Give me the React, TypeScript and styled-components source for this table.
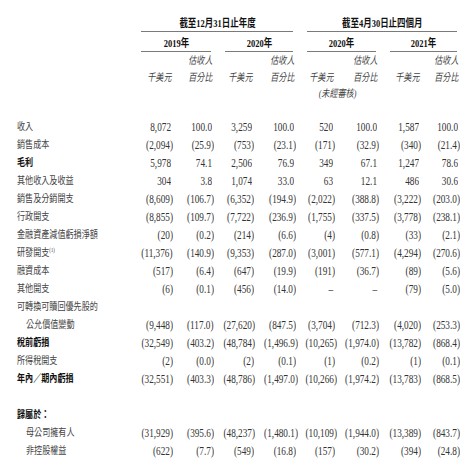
import React from "react";
import styled, { createGlobalStyle } from "styled-components";

const COLS = "130px 43px 41px 40px 42px 39px 44px 42px 39px";

const GlobalStyle = createGlobalStyle`
  html, body {
    margin: 0;
    padding: 0;
    background: #fff;
  }
  body {
    font-family: "Liberation Serif", "Noto Sans CJK TC", serif;
    color: #3a3a3a;
  }
`;

const Page = styled.div`
  width: 472px;
  height: 462px;
  overflow: hidden;
  padding-top: 16px;
  box-sizing: border-box;
`;

const Row = styled.div<{ $h: number }>`
  display: grid;
  grid-template-columns: ${COLS};
  height: ${(p) => p.$h}px;
  line-height: ${(p) => p.$h}px;
`;

const Spacer = styled.div<{ $h: number }>`
  height: ${(p) => p.$h}px;
`;

// scaled text: the reference uses a condensed Ming/Times face
const Txt = styled.span<{ $origin?: string }>`
  display: inline-block;
  white-space: nowrap;
  transform: scaleX(0.77);
  transform-origin: ${(p) => p.$origin || "right"} center;
`;

const GroupHead = styled.div<{ $span: number }>`
  grid-column: span ${(p) => p.$span};
  margin: 0 3px 0 11px;
  text-align: center;
  font-weight: bold;
  font-size: 11px;
  color: #111;
  border-bottom: 1px solid #7a7a7a;
  height: 15px;
  line-height: 14px;
`;

const SubHead = styled.div<{ $span?: number; $center?: boolean }>`
  grid-column: span ${(p) => p.$span || 1};
  text-align: ${(p) => (p.$center ? "center" : "right")};
  padding-right: ${(p) => (p.$center ? 0 : 2)}px;
  font-style: italic;
  font-size: 10.5px;
  color: #444;
`;

const Label = styled.div<{ $bold?: boolean; $indent?: boolean }>`
  padding-left: ${(p) => (p.$indent ? 26 : 17)}px;
  font-size: 10.5px;
  font-weight: ${(p) => (p.$bold ? "bold" : "normal")};
  color: ${(p) => (p.$bold ? "#111" : "#444")};
  white-space: nowrap;
`;

const Sup = styled.sup`
  font-size: 6px;
  line-height: 0;
  vertical-align: 4px;
`;

const Num = styled.div<{ $hang: boolean }>`
  text-align: right;
  padding-right: ${(p) => (p.$hang ? 0 : 2)}px;
  font-size: 12px;
  color: #333;
`;

type Line = {
  label?: string;
  sup?: string;
  bold?: boolean;
  indent?: boolean;
  v?: string[];
};

const lines: Line[] = [
  { label: "收入", v: ["8,072", "100.0", "3,259", "100.0", "520", "100.0", "1,587", "100.0"] },
  { label: "銷售成本", v: ["(2,094)", "(25.9)", "(753)", "(23.1)", "(171)", "(32.9)", "(340)", "(21.4)"] },
  { label: "毛利", bold: true, v: ["5,978", "74.1", "2,506", "76.9", "349", "67.1", "1,247", "78.6"] },
  { label: "其他收入及收益", v: ["304", "3.8", "1,074", "33.0", "63", "12.1", "486", "30.6"] },
  { label: "銷售及分銷開支", v: ["(8,609)", "(106.7)", "(6,352)", "(194.9)", "(2,022)", "(388.8)", "(3,222)", "(203.0)"] },
  { label: "行政開支", v: ["(8,855)", "(109.7)", "(7,722)", "(236.9)", "(1,755)", "(337.5)", "(3,778)", "(238.1)"] },
  { label: "金融資產減值虧損淨額", v: ["(20)", "(0.2)", "(214)", "(6.6)", "(4)", "(0.8)", "(33)", "(2.1)"] },
  { label: "研發開支", sup: "(1)", v: ["(11,376)", "(140.9)", "(9,353)", "(287.0)", "(3,001)", "(577.1)", "(4,294)", "(270.6)"] },
  { label: "融資成本", v: ["(517)", "(6.4)", "(647)", "(19.9)", "(191)", "(36.7)", "(89)", "(5.6)"] },
  { label: "其他開支", v: ["(6)", "(0.1)", "(456)", "(14.0)", "–", "–", "(79)", "(5.0)"] },
  { label: "可轉換可贖回優先股的" },
  { label: "公允價值變動", indent: true, v: ["(9,448)", "(117.0)", "(27,620)", "(847.5)", "(3,704)", "(712.3)", "(4,020)", "(253.3)"] },
  { label: "稅前虧損", bold: true, v: ["(32,549)", "(403.2)", "(48,784)", "(1,496.9)", "(10,265)", "(1,974.0)", "(13,782)", "(868.4)"] },
  { label: "所得稅開支", v: ["(2)", "(0.0)", "(2)", "(0.1)", "(1)", "(0.2)", "(1)", "(0.1)"] },
  { label: "年內／期內虧損", bold: true, v: ["(32,551)", "(403.3)", "(48,786)", "(1,497.0)", "(10,266)", "(1,974.2)", "(13,783)", "(868.5)"] },
  {},
  { label: "歸屬於：", bold: true },
  { label: "母公司擁有人", indent: true, v: ["(31,929)", "(395.6)", "(48,237)", "(1,480.1)", "(10,109)", "(1,944.0)", "(13,389)", "(843.7)"] },
  { label: "非控股權益", indent: true, v: ["(622)", "(7.7)", "(549)", "(16.8)", "(157)", "(30.2)", "(394)", "(24.8)"] },
];

const years = ["2019", "2020", "2020", "2021"];

const App = () => {
  return (
    <Page>
      <GlobalStyle />
      <Row $h={16}>
        <div />
        <GroupHead $span={4}>
          <Txt $origin="center">截至12月31日止年度</Txt>
        </GroupHead>
        <GroupHead $span={4}>
          <Txt $origin="center">截至4月30日止四個月</Txt>
        </GroupHead>
      </Row>
      <Spacer $h={4} />
      <Row $h={16}>
        <div />
        {years.map((y, i) => (
          <GroupHead key={i} $span={2}>
            <Txt $origin="center">{y}年</Txt>
          </GroupHead>
        ))}
      </Row>
      <Row $h={17}>
        <div />
        {years.map((_, i) => (
          <React.Fragment key={i}>
            <SubHead />
            <SubHead>
              <Txt>估收人</Txt>
            </SubHead>
          </React.Fragment>
        ))}
      </Row>
      <Row $h={17}>
        <div />
        {years.map((_, i) => (
          <React.Fragment key={i}>
            <SubHead>
              <Txt>千美元</Txt>
            </SubHead>
            <SubHead>
              <Txt>百分比</Txt>
            </SubHead>
          </React.Fragment>
        ))}
      </Row>
      <Row $h={16}>
        <div />
        <SubHead $span={4} />
        <SubHead $span={2} $center>
          <Txt $origin="center">(未經審核)</Txt>
        </SubHead>
      </Row>
      <Spacer $h={16} />
      {lines.map((l, i) => (
        <Row key={i} $h={18}>
          <Label $bold={l.bold} $indent={l.indent}>
            {l.label && (
              <Txt $origin="left">
                {l.label}
                {l.sup && <Sup>{l.sup}</Sup>}
              </Txt>
            )}
          </Label>
          {(l.v || []).map((n, j) => (
            <Num key={j} $hang={n.startsWith("(")}>
              <Txt>{n}</Txt>
            </Num>
          ))}
        </Row>
      ))}
    </Page>
  );
};

export default App;
